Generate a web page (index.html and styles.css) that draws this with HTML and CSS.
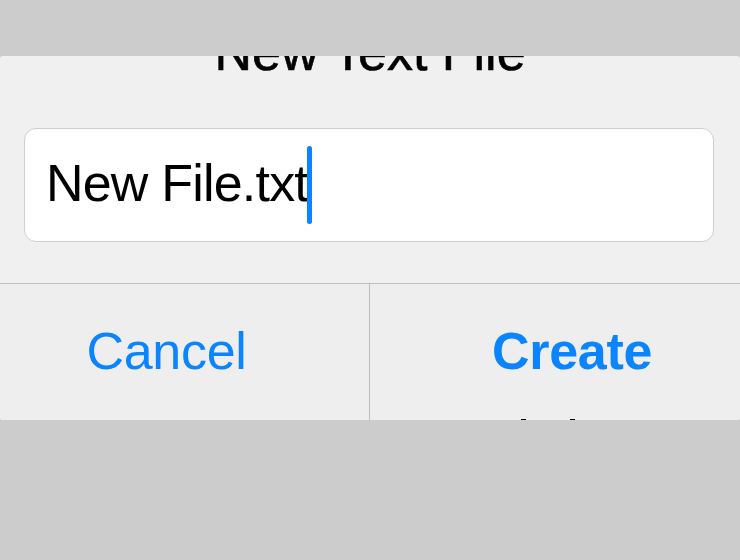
FILE: index.html
```html
<!DOCTYPE html>
<html>
  <head>
    <title>New Text File</title>
    <link rel="stylesheet" href="styles.css">
  </head>
  <body>
    <div class="dialog">
      <h1 class="dialog-title">New Text File</h1>
      <div class="field">
        <span class="field-value">New File.txt</span><span class="caret"></span>
      </div>
      <div class="actions">
        <button class="action cancel">Cancel</button>
        <button class="action create">Create</button>
      </div>
      <div class="peek">
        <span class="tick"></span>
        <span class="tick"></span>
      </div>
    </div>
  </body>
</html>
```

FILE: styles.css
```css
body {
  margin: 0;
  padding-top: 56px;
  height: 504px;
  background-color: #cccccc;
  font-family: "Liberation Sans", Arial, sans-serif;
  overflow: hidden;
}
.dialog {
  position: relative;
  height: 364px;
  background-color: #f0f0f0;
  border-radius: 3px;
  overflow: hidden;
  display: flex;
  flex-direction: column;
}
.dialog-title {
  margin: -32px 0 2px;
  height: 56px;
  line-height: 56px;
  text-align: center;
  font-size: 52px;
  font-weight: normal;
  color: #000000;
  -webkit-text-stroke: 0.6px #000000;
}
.field {
  display: flex;
  align-items: center;
  margin: 46px 26px 0 24px;
  height: 112px;
  padding-left: 21px;
  background-color: #ffffff;
  border: 1px solid #cfcfcf;
  border-radius: 12px;
}
.field-value {
  font-size: 52px;
  letter-spacing: -0.8px;
  margin-top: -5px;
  color: #000000;
}
.caret {
  display: inline-block;
  width: 5px;
  height: 78px;
  margin-left: -1px;
  background-color: #0a84ff;
  border-radius: 3px;
}
.actions {
  display: grid;
  grid-template-columns: 1fr 1fr;
  margin-top: 41px;
  flex: 1;
  border-top: 1px solid #bdbdbd;
  background-color: #eeeeee;
}
.action {
  border: none;
  background: none;
  padding: 0 0 2px;
  font-family: inherit;
  font-size: 52px;
  letter-spacing: -0.3px;
  color: #0a84ff;
}
.cancel {
  border-right: 1px solid #bdbdbd;
  padding-right: 36px;
}
.create {
  font-weight: bold;
  padding-left: 34px;
}
.peek {
  position: absolute;
  left: 521px;
  bottom: -2px;
  display: flex;
  gap: 44px;
}
.tick {
  width: 5px;
  height: 3px;
  background-color: #000000;
}
```
